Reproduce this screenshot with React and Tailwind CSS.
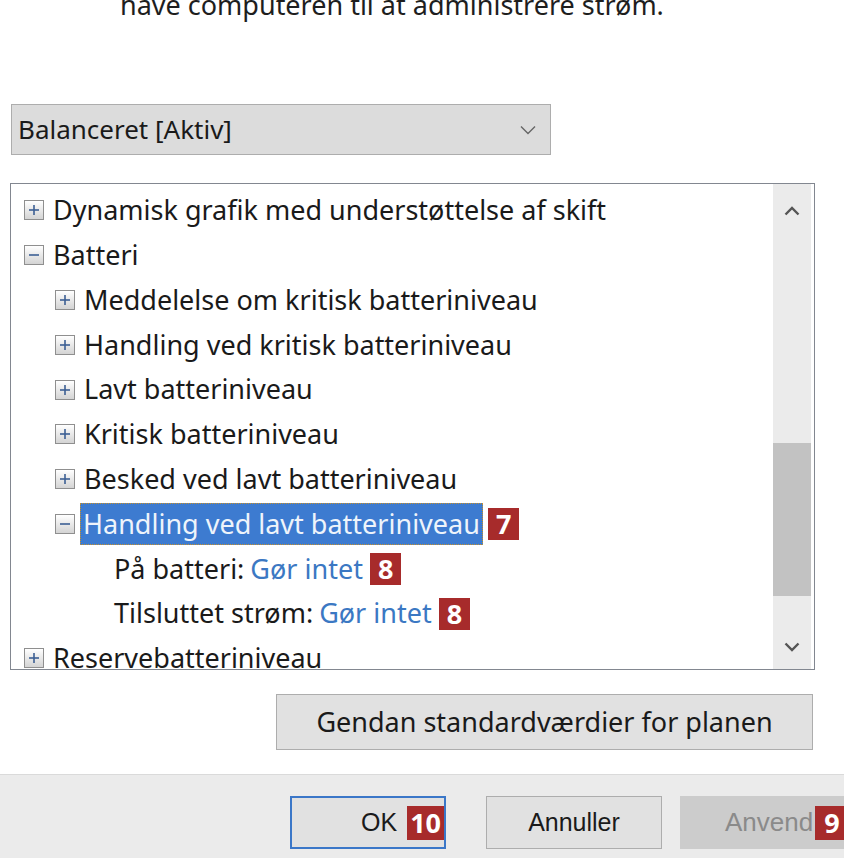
import React from "react";

const font = { fontFamily: "'Noto Sans', 'Open Sans', sans-serif" };

function Box({ open }) {
  return (
    <span className="inline-flex h-[20px] w-[20px] shrink-0 items-center justify-center border border-[#8f8f8f] bg-gradient-to-b from-[#ffffff] to-[#d4d4d4]">
      <svg width="14" height="14" viewBox="0 0 14 14">
        <path d="M2 7h10" stroke="#3c5f94" strokeWidth="1.6" />
        {!open && <path d="M7 2v10" stroke="#3c5f94" strokeWidth="1.6" />}
      </svg>
    </span>
  );
}

function Badge({ n, className = "" }) {
  return (
    <span
      className={`inline-flex h-[32px] shrink-0 items-center justify-center bg-[#a72b2b] px-[8px] text-[27px] font-bold leading-none text-white ${className}`}
      style={{ fontFamily: "'Open Sans', 'Noto Sans', sans-serif" }}
    >
      {n}
    </span>
  );
}

function Row({ level, open, children }) {
  const pad = level === 0 ? "pl-[13px]" : "pl-[44px]";
  return (
    <div className={`flex h-[44.8px] items-center ${pad}`}>
      <Box open={open} />
      <span className="ml-[9px] whitespace-nowrap text-[#1a1a1a]">{children}</span>
    </div>
  );
}

export default function App() {
  return (
    <div className="relative h-[858px] w-[844px] overflow-hidden bg-white text-[27px]" style={font}>
      {/* Cut-off description line */}
      <div className="h-[104px] overflow-hidden">
        <p className="-mt-[15px] pl-[120px] text-[27px] leading-[40px] text-[#1e1e1e]">
          have computeren til at administrere strøm.
        </p>
      </div>

      {/* Plan select */}
      <div className="ml-[11px] flex h-[51px] w-[540px] items-center justify-between border border-[#adadad] bg-[#dcdcdc] pl-[6px] pr-[14px] text-[26px] text-[#1a1a1a]">
        <span>Balanceret [Aktiv]</span>
        <svg width="16" height="10" viewBox="0 0 16 10">
          <path d="M1 1.5l7 7 7-7" fill="none" stroke="#666" strokeWidth="1.4" />
        </svg>
      </div>

      {/* Settings tree */}
      <div className="ml-[10px] mt-[28px] flex h-[487px] w-[805px] border border-[#828790]">
        <div className="flex-1 overflow-hidden pt-[4px]">
          <Row level={0}>Dynamisk grafik med understøttelse af skift</Row>
          <Row level={0} open>Batteri</Row>
          <Row level={1}>Meddelelse om kritisk batteriniveau</Row>
          <Row level={1}>Handling ved kritisk batteriniveau</Row>
          <Row level={1}>Lavt batteriniveau</Row>
          <Row level={1}>Kritisk batteriniveau</Row>
          <Row level={1}>Besked ved lavt batteriniveau</Row>
          <div className="flex h-[44.8px] items-center pl-[44px]">
            <Box open />
            <span className="ml-[5px] flex h-[42px] items-center whitespace-nowrap border border-dotted border-[#c8902a] bg-[#3d7bd0] px-[2px] text-[#eef4fb]">
              Handling ved lavt batteriniveau
            </span>
            <Badge n="7" className="ml-[5px]" />
          </div>
          <div className="flex h-[44.8px] items-center pl-[103px]">
            <span className="whitespace-nowrap text-[#1a1a1a]">På batteri:</span>
            <span className="ml-[6px] whitespace-nowrap text-[#3b78c3]">Gør intet</span>
            <Badge n="8" className="ml-[7px]" />
          </div>
          <div className="flex h-[44.8px] items-center pl-[103px]">
            <span className="whitespace-nowrap text-[#1a1a1a]">Tilsluttet strøm:</span>
            <span className="ml-[6px] whitespace-nowrap text-[#3b78c3]">Gør intet</span>
            <Badge n="8" className="ml-[7px]" />
          </div>
          <Row level={0}>Reservebatteriniveau</Row>
        </div>

        {/* Scrollbar */}
        <div className="mr-[3px] flex w-[38px] shrink-0 flex-col bg-[#ebebeb]">
          <div className="flex h-[259px] flex-col items-center pt-[22px]">
            <svg width="16" height="10" viewBox="0 0 16 10">
              <path d="M1.5 8.5l6.5-6.5 6.5 6.5" fill="none" stroke="#555" strokeWidth="2.4" />
            </svg>
          </div>
          <div className="h-[153px] bg-[#c2c2c2]" />
          <div className="flex flex-1 flex-col items-center justify-end pb-[17px]">
            <svg width="16" height="10" viewBox="0 0 16 10">
              <path d="M1.5 1.5l6.5 6.5 6.5-6.5" fill="none" stroke="#555" strokeWidth="2.4" />
            </svg>
          </div>
        </div>
      </div>

      {/* Restore defaults */}
      <div className="mt-[24px] flex justify-end pr-[31px]">
        <button className="h-[56px] w-[537px] border border-[#adadad] bg-[#e1e1e1] text-[#1a1a1a]">
          Gendan standardværdier for planen
        </button>
      </div>

      {/* Dialog buttons */}
      <div
        className="mt-[24px] flex h-[90px] items-start border-t border-[#dadada] bg-[#ebebeb] pl-[290px] pt-[21px] text-[25px]"
        style={{ fontFamily: "'Liberation Sans', Arial, sans-serif" }}
      >
        <button className="flex h-[53px] w-[156px] shrink-0 items-center border-2 border-[#3b77c8] bg-[#e1e1e1] pl-[69px] text-[#1a1a1a]">
          <span>OK</span>
          <Badge n="10" className="ml-[10px] !h-[34px] !px-[3px]" />
        </button>
        <button className="ml-[40px] flex h-[53px] w-[176px] shrink-0 items-center justify-center border border-[#adadad] bg-[#e1e1e1] text-[#1a1a1a]">
          Annuller
        </button>
        <button className="ml-[18px] flex h-[53px] w-[180px] shrink-0 items-center border border-[#cccccc] bg-[#cccccc] pl-[44px] text-[26px] text-[#8a8a8a]">
          <span>Anvend</span>
          <Badge n="9" className="ml-[2px] !h-[34px] !px-[9px]" />
        </button>
      </div>
    </div>
  );
}
